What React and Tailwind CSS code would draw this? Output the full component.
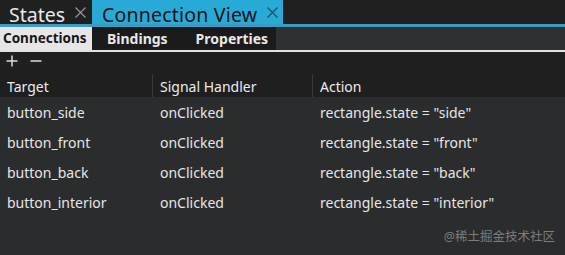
import React from "react";

const rows = [
  { target: "button_side", handler: "onClicked", action: 'rectangle.state = "side"' },
  { target: "button_front", handler: "onClicked", action: 'rectangle.state = "front"' },
  { target: "button_back", handler: "onClicked", action: 'rectangle.state = "back"' },
  { target: "button_interior", handler: "onClicked", action: 'rectangle.state = "interior"' },
];

const CloseIcon = ({ className }) => (
  <svg width="11" height="11" viewBox="0 0 11 11" className={className}>
    <path d="M0.5 0.5 L10.5 10.5 M10.5 0.5 L0.5 10.5" stroke="currentColor" strokeWidth="1.1" fill="none" />
  </svg>
);

export default function App() {
  return (
    <div
      className="w-[565px] h-[255px] bg-[#2b2c2e] text-[#e4e4e4] overflow-hidden flex flex-col relative"
      style={{ fontFamily: '"Noto Sans", "Open Sans", sans-serif' }}
    >
      {/* document tabs */}
      <div className="h-[27px] flex bg-[#202020] border-b-[3px] border-[#3a9cc2] shrink-0">
        <div className="w-[92px] flex items-start pl-[9px] gap-[10px]">
          <span className="text-[19.5px] leading-normal text-[#e8e8e8]">States</span>
          <CloseIcon className="text-[#9a9a9a] mt-[7px]" />
        </div>
        <div className="w-[191px] bg-[#29a9d6] flex items-start pl-[10px] gap-[10px]">
          <span className="text-[19.5px] leading-normal text-[#141414] tracking-[0.2px]">Connection View</span>
          <CloseIcon className="text-[#1b4e61] mt-[7px]" />
        </div>
      </div>

      {/* sub tabs */}
      <div className="h-[23px] flex bg-[#2e3032] shrink-0 text-[13.5px] font-bold">
        <div className="w-[92px] bg-[#e6e6e6] text-[#161616] flex items-center pl-[3px]">Connections</div>
        <div className="w-[184px] bg-[#1b1b1b] text-[#e8e8e8] flex items-center gap-[28px] pl-[15px] text-[14px]">
          <span>Bindings</span>
          <span>Properties</span>
        </div>
      </div>
      <div className="h-[2px] bg-[#e2e2e2] shrink-0" />

      {/* toolbar + header */}
      <div className="bg-[#1f1f1f] shrink-0">
        <div className="h-[18px] flex items-center gap-[12px] pl-[6px] text-[#dcdcdc]">
          <svg width="12" height="12" viewBox="0 0 12 12">
            <path d="M6 0.5 V11.5 M0.5 6 H11.5" stroke="currentColor" strokeWidth="1.5" />
          </svg>
          <svg width="12" height="12" viewBox="0 0 12 12">
            <path d="M0.5 6 H11.5" stroke="currentColor" strokeWidth="1.5" />
          </svg>
        </div>
        <div className="h-[27px] grid grid-cols-[152px_160px_1fr] items-end text-[14px] text-[#ececec]">
          {["Target", "Signal Handler", "Action"].map((h, i) => (
            <div
              key={h}
              className={`h-[23px] flex items-center pl-[7px] ${i > 0 ? "border-l border-[#3a3a3a]" : ""}`}
            >
              <span className="mt-[2px]">{h}</span>
            </div>
          ))}
        </div>
      </div>

      {/* rows */}
      <div className="flex flex-col text-[14px] text-[#e6e6e6]">
        {rows.map((r) => (
          <div key={r.target} className="h-[30px] grid grid-cols-[152px_160px_1fr] items-center">
            <div className="pl-[7px]">{r.target}</div>
            <div className="pl-[8px]">{r.handler}</div>
            <div className="pl-[8px]">{r.action}</div>
          </div>
        ))}
      </div>

      <div
        className="absolute right-[10px] bottom-[8px] text-[12.5px] text-[#7c7c7c]"
        style={{ fontFamily: '"Noto Sans", "Noto Sans CJK SC", sans-serif' }}
      >
        @稀土掘金技术社区
      </div>
    </div>
  );
}
